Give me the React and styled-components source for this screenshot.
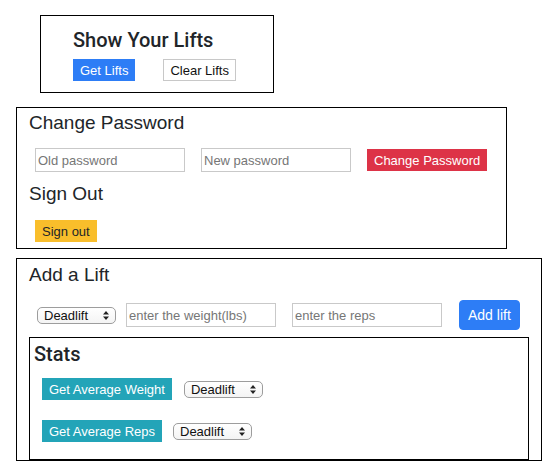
import React from "react";
import styled, { createGlobalStyle } from "styled-components";

const GlobalStyle = createGlobalStyle`
  *, *::before, *::after { box-sizing: border-box; }
  body {
    margin: 0;
    background: #fff;
    color: #212529;
    font-family: "Liberation Sans", Arial, sans-serif;
  }
`;

const Page = styled.div`
  padding-top: 15px;
  display: flex;
  flex-direction: column;
  align-items: flex-start;
`;

const Card = styled.section`
  border: 1px solid #000;
  width: ${p => p.$width}px;
  margin-left: ${p => p.$left}px;
  margin-top: ${p => p.$top || 0}px;
  padding: ${p => p.$pad};
`;

const Heading = styled.h2`
  margin: 0;
  font-family: ${p => (p.$strong ? "Roboto, \"Liberation Sans\", sans-serif" : "inherit")};
  font-size: ${p => (p.$strong ? 20 : 19)}px;
  line-height: ${p => (p.$strong ? 24 : 23)}px;
  font-weight: ${p => (p.$strong ? 500 : 400)};
  margin-top: ${p => p.$top || 0}px;
`;

const Row = styled.div`
  display: flex;
  align-items: center;
  gap: ${p => p.$gap || 0}px;
  margin-top: ${p => p.$top || 0}px;
  margin-left: ${p => p.$left || 0}px;
`;

const colors = {
  primary: { bg: "#2d7df6", fg: "#fff", border: "#2d7df6" },
  light: { bg: "#fff", fg: "#111", border: "#c8c8c8" },
  danger: { bg: "#dd3347", fg: "#fff", border: "#dd3347" },
  warning: { bg: "#f9be2b", fg: "#212529", border: "#f9be2b" },
  info: { bg: "#23a4b8", fg: "#fff", border: "#23a4b8" },
};

const Button = styled.button`
  height: ${p => p.$height || 22}px;
  padding: 0 ${p => p.$padX || 6}px;
  margin-left: ${p => p.$left || 0}px;
  border: 1px solid ${p => colors[p.$variant].border};
  border-radius: ${p => p.$radius || 0}px;
  background: ${p => colors[p.$variant].bg};
  color: ${p => colors[p.$variant].fg};
  font-family: "Liberation Sans", Arial, sans-serif;
  font-size: ${p => p.$size || 13}px;
  line-height: 1;
  cursor: pointer;
  white-space: nowrap;
`;

const TextInput = styled.input`
  width: 150px;
  height: 24px;
  padding: 0 2px;
  margin-left: ${p => p.$left || 0}px;
  border: 1px solid #c9c9c9;
  border-radius: 0;
  font-family: "Liberation Sans", Arial, sans-serif;
  font-size: 13px;
  color: #212529;
  &::placeholder { color: #767676; }
`;

const SelectWrap = styled.span`
  position: relative;
  display: inline-flex;
  margin-left: ${p => p.$left || 0}px;
`;

const Select = styled.select`
  appearance: none;
  width: 79px;
  height: 17px;
  padding: 0 0 0 6px;
  border: 1px solid #9d9d9d;
  border-radius: 5px;
  background: linear-gradient(#fff, #f4f4f4);
  font-family: "Liberation Sans", Arial, sans-serif;
  font-size: 13px;
  font-weight: 400;
  line-height: 15px;
  color: #111;
`;

const Arrows = styled.svg`
  position: absolute;
  right: 7px;
  top: 4px;
  pointer-events: none;
`;

function LiftSelect({ left }) {
  return (
    <SelectWrap $left={left}>
      <Select defaultValue="Deadlift">
        <option>Deadlift</option>
        <option>Squat</option>
        <option>Bench</option>
      </Select>
      <Arrows width="6" height="9" viewBox="0 0 6 9">
        <path d="M3 0 L6 3.6 L0 3.6 Z M0 5.4 L6 5.4 L3 9 Z" fill="#222" />
      </Arrows>
    </SelectWrap>
  );
}

export default function App() {
  return (
    <>
      <GlobalStyle />
      <Page>
        <Card $width={234} $left={40} $pad="12px 0 11px 32px">
          <Heading $strong>Show Your Lifts</Heading>
          <Row $top={7} $gap={28}>
            <Button $variant="primary">Get Lifts</Button>
            <Button $variant="light">Clear Lifts</Button>
          </Row>
        </Card>

        <Card $width={491} $left={16} $top={14} $pad="3px 12px 6px">
          <Heading>Change Password</Heading>
          <Row $top={14} $left={6} $gap={16}>
            <TextInput type="password" placeholder="Old password" />
            <TextInput type="password" placeholder="New password" />
            <Button $variant="danger">Change Password</Button>
          </Row>
          <Heading $top={10}>Sign Out</Heading>
          <Row $top={15} $left={6}>
            <Button $variant="warning">Sign out</Button>
          </Row>
        </Card>

        <Card $width={526} $left={16} $top={9} $pad="4px 12px 0">
          <Heading>Add a Lift</Heading>
          <Row $top={14} $left={8}>
            <LiftSelect />
            <TextInput $left={10} placeholder="enter the weight(lbs)" />
            <TextInput $left={16} placeholder="enter the reps" />
            <Button $variant="primary" $height={30} $radius={4} $padX={8} $size={14} $left={17}>
              Add lift
            </Button>
          </Row>
          <Card $width={500} $left={0} $top={7} $pad="4px 0 17px 4px">
            <Heading $strong>Stats</Heading>
            <Row $top={12} $left={8}>
              <Button $variant="info">Get Average Weight</Button>
              <LiftSelect left={12} />
            </Row>
            <Row $top={20} $left={8}>
              <Button $variant="info">Get Average Reps</Button>
              <LiftSelect left={11} />
            </Row>
          </Card>
        </Card>
      </Page>
    </>
  );
}
